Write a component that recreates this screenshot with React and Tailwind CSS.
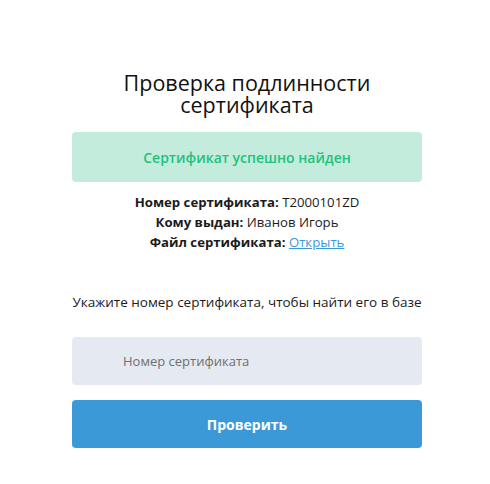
export default function App() {
  const font = { fontFamily: '"Open Sans", "Noto Sans", sans-serif' };
  return (
    <div className="min-h-[484px] w-full bg-white flex justify-center pl-[4px] text-[#1b1b1b]" style={font}>
      <div className="w-[350px] flex flex-col items-stretch pt-[72px]">
        <h1 className="text-center text-[21.5px] leading-[22px] font-normal text-[#111]">
          Проверка подлинности
          <br />
          сертификата
        </h1>
        <div className="mt-[16px] h-[50px] rounded-[4px] bg-[#c4ecdc] flex items-center justify-center text-[14px] font-semibold text-[#22c27e]">
          Сертификат успешно найден
        </div>
        <div className="mt-[10px] flex flex-col items-center text-[13.2px] leading-[20px]">
          <div>
            <span className="font-bold">Номер сертификата:</span> T2000101ZD
          </div>
          <div>
            <span className="font-bold">Кому выдан:</span> Иванов Игорь
          </div>
          <div>
            <span className="font-bold">Файл сертификата:</span>{" "}
            <a href="#" className="text-[#3b99dc] underline">Открыть</a>
          </div>
        </div>
        <p className="mt-[40px] text-[13.5px] leading-[20px] text-center whitespace-nowrap">
          Укажите номер сертификата, чтобы найти его в базе
        </p>
        <input
          className="mt-[25px] h-[48px] rounded-[4px] bg-[#e5e9f1] pl-[51px] text-[13px] text-[#333] placeholder:text-[#6f6f6f] outline-none"
          placeholder="Номер сертификата"
          style={font}
        />
        <button
          className="mt-[15px] h-[48px] rounded-[4px] bg-[#3b99d8] text-white text-[14px] font-bold"
          style={font}
        >
          Проверить
        </button>
      </div>
    </div>
  );
}
